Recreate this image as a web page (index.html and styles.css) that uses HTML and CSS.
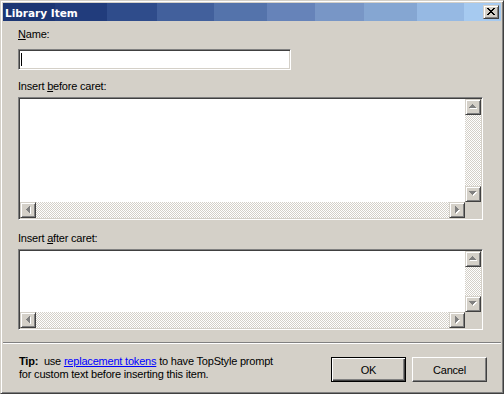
FILE: index.html
```html
<!DOCTYPE html>
<html lang="en">
<head>
    <meta charset="UTF-8">
    <title>Library Item</title>
    <link rel="stylesheet" href="styles.css">
</head>
<body>
    <div class="window">
        <!-- Caption bar -->
        <div class="titlebar">
            <span class="title">Library Item</span>
            <div class="raised close-btn">
                <svg viewBox="1 1 14 12" width="14" height="12">
                    <path d="M4 3h2v1H4ZM10 3h2v1h-2ZM5 4h2v1H5ZM9 4h2v1H9ZM6 5h4v1H6ZM7 6h2v1H7ZM6 7h4v1H6ZM5 8h2v1H5ZM9 8h2v1H9ZM4 9h2v1H4ZM10 9h2v1h-2Z"/>
                </svg>
            </div>
        </div>

        <div class="content">
            <div class="label"><u>N</u>ame:</div>
            <div class="sunken name-field"><span class="caret"></span></div>

            <div class="label label-before">Insert <u>b</u>efore caret:</div>
            <div class="sunken editor editor-before">
                <div class="editor-text"></div>
                <div class="vscroll">
                    <div class="raised arrow"><svg viewBox="1 1 14 14" width="14" height="14"><path class="hi" d="M8 6h1v1h1v1h1v1h1v1H5V9h1V8h1V7h1Z"/><path class="lo" d="M7 5h1v1h1v1h1v1h1v1H4V8h1V7h1V6h1Z"/></svg></div>
                    <div class="track"></div>
                    <div class="raised arrow"><svg viewBox="1 1 14 14" width="14" height="14"><path class="hi" d="M5 6h7v1h-1v1h-1v1H9v1H8V9H7V8H6V7H5Z"/><path class="lo" d="M4 5h7v1h-1v1H9v1H8v1H7V8H6V7H5V6H4Z"/></svg></div>
                </div>
                <div class="hscroll">
                    <div class="raised arrow"><svg viewBox="1 1 14 14" width="14" height="14"><path class="hi" d="M7 8h1V7h1V6h1V5h1v7h-1v-1H9v-1H8V9H7Z"/><path class="lo" d="M6 7h1V6h1V5h1V4h1v7H9v-1H8V9H7V8H6Z"/></svg></div>
                    <div class="track"></div>
                    <div class="raised arrow"><svg viewBox="1 1 14 14" width="14" height="14"><path class="hi" d="M7 5h1v1h1v1h1v1h1v1h-1v1H9v1H8v1H7Z"/><path class="lo" d="M6 4h1v1h1v1h1v1h1v1H9v1H8v1H7v1H6Z"/></svg></div>
                </div>
                <div class="corner"></div>
            </div>

            <div class="label label-after">Insert <u>a</u>fter caret:</div>
            <div class="sunken editor editor-after">
                <div class="editor-text"></div>
                <div class="vscroll">
                    <div class="raised arrow"><svg viewBox="1 1 14 14" width="14" height="14"><path class="hi" d="M8 6h1v1h1v1h1v1h1v1H5V9h1V8h1V7h1Z"/><path class="lo" d="M7 5h1v1h1v1h1v1h1v1H4V8h1V7h1V6h1Z"/></svg></div>
                    <div class="track"></div>
                    <div class="raised arrow"><svg viewBox="1 1 14 14" width="14" height="14"><path class="hi" d="M5 6h7v1h-1v1h-1v1H9v1H8V9H7V8H6V7H5Z"/><path class="lo" d="M4 5h7v1h-1v1H9v1H8v1H7V8H6V7H5V6H4Z"/></svg></div>
                </div>
                <div class="hscroll">
                    <div class="raised arrow"><svg viewBox="1 1 14 14" width="14" height="14"><path class="hi" d="M7 8h1V7h1V6h1V5h1v7h-1v-1H9v-1H8V9H7Z"/><path class="lo" d="M6 7h1V6h1V5h1V4h1v7H9v-1H8V9H7V8H6Z"/></svg></div>
                    <div class="track"></div>
                    <div class="raised arrow"><svg viewBox="1 1 14 14" width="14" height="14"><path class="hi" d="M7 5h1v1h1v1h1v1h1v1h-1v1H9v1H8v1H7Z"/><path class="lo" d="M6 4h1v1h1v1h1v1h1v1H9v1H8v1H7v1H6Z"/></svg></div>
                </div>
                <div class="corner"></div>
            </div>
        </div>

        <div class="separator"></div>

        <!-- Tip and dialog buttons -->
        <div class="footer">
            <p class="tip"><b>Tip:</b>&nbsp; use <a href="#">replacement tokens</a> to have TopStyle prompt<br>for custom text before inserting this item.</p>
            <div class="buttons">
                <button class="btn btn-default">OK</button>
                <button class="btn">Cancel</button>
            </div>
        </div>
    </div>
</body>
</html>
```

FILE: styles.css
```css
* {
    box-sizing: border-box;
}

body {
    margin: 0;
    font-family: "Liberation Sans", Arial, sans-serif;
    font-size: 11px;
    letter-spacing: -0.2px;
    color: #000;
}

/* Classic 3D window frame */
.window {
    width: 504px;
    height: 394px;
    background-color: #d4d0c8;
    border: 1px solid;
    border-color: #d4d0c8 #404040 #404040 #d4d0c8;
    padding: 2px;
    box-shadow: inset 1px 1px #fff, inset -1px -1px #808080;
    display: flex;
    flex-direction: column;
}

/* Banded caption gradient */
.titlebar {
    height: 18px;
    display: flex;
    align-items: center;
    padding: 0 2px;
    background: linear-gradient(to right,
        #1c3674 0 52px, #213c7c 52px 104px, #2f4c8b 104px 154px,
        #42609c 154px 211px, #5473ab 211px 264px, #6683b9 264px 312px,
        #7896c6 312px 361px, #85a6d2 361px 414px, #96b9e3 414px 461px,
        #a6caf0 461px);
}

.title {
    font-family: "DejaVu Sans", Verdana, sans-serif;
    font-weight: bold;
    font-size: 10.5px;
    letter-spacing: 0;
    color: #fff;
    padding-top: 1px;
}

.raised {
    background-color: #d4d0c8;
    border: 1px solid;
    border-color: #d4d0c8 #404040 #404040 #d4d0c8;
    box-shadow: inset 1px 1px #fff, inset -1px -1px #808080;
}

.close-btn {
    width: 16px;
    height: 14px;
    margin-left: auto;
}

.close-btn svg,
.arrow svg {
    display: block;
    shape-rendering: crispEdges;
}

.close-btn path {
    fill: #000;
}

.content {
    padding: 7px 18px 0 15px;
}

.label {
    line-height: 13px;
    height: 13px;
}

.label-before {
    margin-top: 10px;
}

.label-after {
    margin-top: 12px;
}

/* Sunken edit borders */
.sunken {
    background-color: #fff;
    border: 1px solid;
    border-color: #808080 #fff #fff #808080;
    padding: 1px;
    box-shadow: inset 1px 1px #404040, inset -1px -1px #d4d0c8;
}

.name-field {
    width: 273px;
    height: 21px;
    margin-top: 8px;
    display: flex;
    align-items: center;
    padding-left: 2px;
}

.caret {
    width: 1px;
    height: 13px;
    background-color: #000;
}

.editor {
    margin-top: 4px;
    width: 465px;
    display: grid;
    grid-template-columns: 1fr 16px;
    grid-template-rows: 1fr 16px;
}

.editor-before {
    height: 123px;
}

.editor-after {
    height: 81px;
}

.editor-text {
    background-color: #fff;
}

.vscroll {
    display: flex;
    flex-direction: column;
}

.hscroll {
    display: flex;
}

.arrow {
    width: 16px;
    height: 16px;
    flex: none;
}

.arrow .lo {
    fill: #808080;
}

.arrow .hi {
    fill: #fff;
}

.track {
    flex: 1;
    background: repeating-conic-gradient(#fff 0 25%, #d4d0c8 0 50%) 0 0 / 2px 2px;
}

.corner {
    background-color: #d4d0c8;
}

.separator {
    margin-top: 12px;
    height: 2px;
    border-top: 1px solid #808080;
    border-bottom: 1px solid #fff;
}

.footer {
    display: flex;
    align-items: flex-start;
    padding: 11px 14px 0 16px;
}

.tip {
    margin: 0;
    line-height: 13px;
}

.tip a {
    color: #0000ff;
}

.buttons {
    margin-left: auto;
    margin-top: 2px;
    display: flex;
    gap: 6px;
}

.btn {
    width: 75px;
    height: 25px;
    padding: 0;
    font-family: "Liberation Sans", Arial, sans-serif;
    font-size: 11px;
    letter-spacing: -0.2px;
    color: #000;
    background-color: #d4d0c8;
    border: 1px solid;
    border-color: #fff #404040 #404040 #fff;
    box-shadow: inset -1px -1px #808080;
}

.btn-default {
    border-color: #000;
    box-shadow: inset 1px 1px #fff, inset -1px -1px #404040, inset -2px -2px #808080;
}
```
